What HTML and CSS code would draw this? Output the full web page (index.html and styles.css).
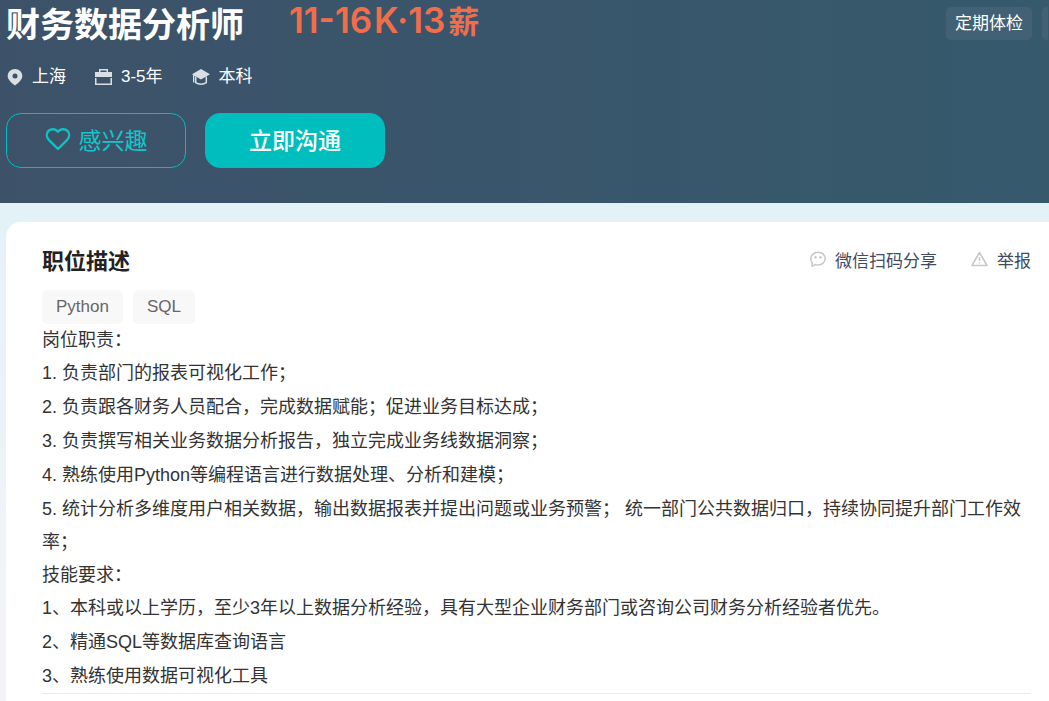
FILE: index.html
```html
<!DOCTYPE html>
<html lang="zh-CN">

<head>
	<meta charset="UTF-8">
	<meta name="viewport" content="width=device-width, initial-scale=1.0">
	<title>财务数据分析师</title>
	<link rel="stylesheet" href="styles.css">
</head>

<body>
	<!-- job banner -->
	<header class="banner">
		<div class="job-primary">
			<div class="name">
				<h1>财务数据分析师</h1>
				<span class="salary">11-16<span class="unit">K·</span>13<span class="months">薪</span></span>
			</div>

			<div class="info">
				<span class="info-item">
					<svg width="16" height="18" viewBox="0 0 16 18">
						<path fill="#dadfe4" fill-rule="evenodd" d="M8 1C4 1 .7 4 .7 8c0 3.300 3 6.300 7.300 9.500C12.300 14.300 15.300 11.300 15.300 8 15.300 4 12 1 8 1zm0 4.500a2.500 2.500 0 1 1 0 5 2.500 2.500 0 0 1 0-5z"/>
					</svg>
					上海
				</span>
				<span class="info-item">
					<svg width="17" height="18" viewBox="0 0 17 18">
						<path fill="#dadfe4" fill-rule="evenodd" d="M4 4V1h9v3h4v5H0V4zM5.500 2.500V4h6V2.500zM0 10h17v7H0zm1.500 0v5.500h14V10z"/>
					</svg>
					3-5年
				</span>
				<span class="info-item">
					<svg width="18" height="18" viewBox="0 0 18 18">
						<path fill="#dadfe4" d="M9 1 18 6.200 9 11.500 0 6.200zM1 6h1.300v8.500H1z"/>
						<path stroke="#dadfe4" fill="none" stroke-width="1.500" d="M3.700 8.500v6.200c3 2 7.600 2 10.600 0V8.500"/>
					</svg>
					本科
				</span>
			</div>

			<div class="btns">
				<button type="button" class="btn btn-like">
					<svg width="26" height="24" viewBox="0 0 26 24">
						<path fill="none" stroke="#15bfc4" stroke-width="2.400" stroke-linejoin="round" d="M13 22 3.800 12.800C1.200 10 1.300 6.200 3.500 3.900 6.200 1.400 10.500 1.700 13 4.700c2.500-3 6.800-3.300 9.500-.8 2.200 2.300 2.300 6.100-.3 8.900z"/>
					</svg>
					<span>感兴趣</span>
				</button>
				<button type="button" class="btn btn-chat"><span>立即沟通</span></button>
			</div>
		</div>

		<!-- welfare tags, the row is cut off at the right edge -->
		<div class="welfare">
			<span class="welfare-tag">定期体检</span>
			<span class="welfare-tag welfare-cut"></span>
		</div>
	</header>

	<!-- job detail -->
	<main class="detail">
		<div class="detail-head">
			<h2>职位描述</h2>
			<div class="links">
				<a href="#">
					<svg width="16" height="16" viewBox="0 0 16 16">
						<path fill="none" stroke="#c8c8c8" stroke-width="1.500" stroke-linejoin="round" d="M8 1.200c4 0 7.200 2.900 7.200 6.400S12 14 8 14c-1 0-1.800-.1-2.600-.4L2 15.200l.3-3.300C1.300 10.800.8 9.300.8 7.600.8 4.100 4 1.200 8 1.200z"/>
						<circle cx="5.500" cy="6.200" r="1.200" fill="#c8c8c8"/>
						<circle cx="10.500" cy="6.200" r="1.200" fill="#c8c8c8"/>
					</svg>
					微信扫码分享
				</a>
				<a href="#">
					<svg width="17" height="16" viewBox="0 0 17 16">
						<path fill="none" stroke="#c8c8c8" stroke-width="1.600" stroke-linejoin="round" d="M8.500 1.500 16 14.500H1z"/>
						<path stroke="#c8c8c8" stroke-width="1.500" d="M8.500 6v4M8.500 11.200v1.300"/>
					</svg>
					举报
				</a>
			</div>
		</div>

		<div class="keywords">
			<span>Python</span>
			<span>SQL</span>
		</div>

		<div class="text">
			<h3>岗位职责：</h3>
			<p>1. 负责部门的报表可视化工作；</p>
			<p>2. 负责跟各财务人员配合，完成数据赋能；促进业务目标达成；</p>
			<p>3. 负责撰写相关业务数据分析报告，独立完成业务线数据洞察；</p>
			<p>4. 熟练使用Python等编程语言进行数据处理、分析和建模；</p>
			<p>5. 统计分析多维度用户相关数据，输出数据报表并提出问题或业务预警； 统一部门公共数据归口，持续协同提升部门工作效率；</p>
		</div>
		<div class="text">
			<h3>技能要求：</h3>
			<p>1、本科或以上学历，至少3年以上数据分析经验，具有大型企业财务部门或咨询公司财务分析经验者优先。</p>
			<p>2、精通SQL等数据库查询语言</p>
			<p>3、熟练使用数据可视化工具</p>
		</div>
		<hr>
	</main>
</body>

</html>
```
FILE: styles.css
```css
* {
	box-sizing: border-box;
}

html {
	background: linear-gradient(#e3f2f6 222px, #f3f4f9 640px);
}

body {
	margin: 0;
	overflow-x: hidden;
	font-family: "Liberation Sans", "Noto Sans CJK SC", sans-serif;
	color: #333;
}

h1, h2, h3, p {
	margin: 0;
}

svg {
	flex: none;
}

/* banner */
.banner {
	display: flex;
	justify-content: space-between;
	padding: 0 1px 35px 6px;
	background: linear-gradient(90deg, #3d5269, #3a556b 40%, #36596c);
	color: #fff;
}

.name {
	display: flex;
	align-items: flex-start;
	gap: 45px;
	height: 50px;
}

.name h1 {
	font-size: 34px;
	line-height: 50px;
}

.salary {
	display: flex;
	align-items: baseline;
	font-family: Inter, "Noto Sans CJK SC", sans-serif;
	font-size: 35px;
	font-weight: 600;
	line-height: 40px;
	color: #f26d49;
}

.salary .unit {
	margin-left: 2px;
}

.salary .months {
	margin-left: 3px;
	font-size: 31px;
	font-weight: bold;
}

.info {
	display: flex;
	gap: 29px;
	margin-top: 15px;
	padding-left: 1px;
	font-size: 17px;
	line-height: 24px;
}

.info-item {
	display: flex;
	align-items: center;
	gap: 9px;
}

/* buttons */
.btns {
	display: flex;
	gap: 19px;
	margin-top: 24px;
}

.btn {
	display: flex;
	align-items: center;
	justify-content: center;
	gap: 8px;
	width: 180px;
	height: 55px;
	padding: 0 0 4px;
	border: 1px solid #00bebd;
	border-radius: 15px;
	font-family: inherit;
	font-size: 23px;
	cursor: pointer;
}

.btn-like {
	background: transparent;
	color: #15c5c9;
}

.btn-chat {
	background: #00bebd;
	color: #fff;
	font-weight: 500;
}

/* welfare tags */
.welfare {
	display: flex;
	gap: 10px;
	padding-top: 7px;
}

.welfare-tag {
	height: 33px;
	padding: 0 9px;
	border-radius: 5px;
	background: #426174;
	font-size: 17px;
	line-height: 33px;
}

.welfare-cut {
	width: 6px;
	padding: 0;
	border-radius: 5px 0 0 5px;
}

/* detail card */
.detail {
	margin: 19px 0 0 6px;
	padding: 21px 18px 16px 36px;
	border-radius: 15px 0 0 0;
	background: #fff;
}

.detail-head {
	display: flex;
	align-items: center;
	justify-content: space-between;
	height: 32px;
}

.detail-head h2 {
	font-size: 22px;
	color: #222;
}

.links {
	display: flex;
	gap: 34px;
}

.links a {
	display: flex;
	align-items: center;
	gap: 9px;
	font-size: 17px;
	color: #414a60;
	text-decoration: none;
}

.keywords {
	display: flex;
	gap: 10px;
	margin-top: 15px;
}

.keywords span {
	padding: 0 14px;
	border-radius: 5px;
	background: #f8f8f8;
	font-size: 17px;
	line-height: 34px;
	color: #666;
}

.text {
	font-size: 18px;
	line-height: 33px;
}

.text h3 {
	font-size: 18px;
	font-weight: normal;
}

.text p + p {
	margin-top: 1px;
}

hr {
	margin: 0;
	border: 0;
	border-top: 1px solid #eaeaea;
}
```
